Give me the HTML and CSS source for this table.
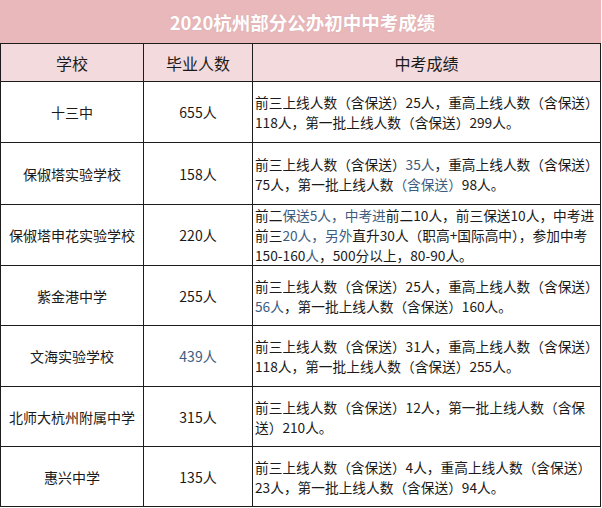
FILE: index.html
```html
<!DOCTYPE html>
<html lang="zh">
<head>
<meta charset="utf-8">
<title>2020杭州部分公办初中中考成绩</title>
<link rel="stylesheet" href="styles.css">
</head>
<body>
<div class="sheet">
  <div class="title">2020杭州部分公办初中中考成绩</div>
  <div class="grid">
    <div class="cell head">学校</div>
    <div class="cell head">毕业人数</div>
    <div class="cell head">中考成绩</div>

    <div class="cell c">十三中</div>
    <div class="cell c">655人</div>
    <div class="cell t"><p class="txt">前三上线人数（含保送）25人，重高上线人数（含保送）<br>118人，第一批上线人数（含保送）299人。</p></div>

    <div class="cell c">保俶塔实验学校</div>
    <div class="cell c">158人</div>
    <div class="cell t"><p class="txt">前三上线人数（含保送）<span class="hl">35人</span>，重高上线人数（含保送）<br>75人，第一批上线人数<span class="hl">（含保送）</span>98人。</p></div>

    <div class="cell c">保俶塔申花实验学校</div>
    <div class="cell c">220人</div>
    <div class="cell t"><p class="txt">前二<span class="hl">保送5人，中考进</span>前二10人，前三保送10人，中考进<br>前三<span class="hl">20人，另外</span>直升30人（职高+国际高中），参加中考<br>150-160<span class="hl">人</span>，500分以上，80-90人。</p></div>

    <div class="cell c">紫金港中学</div>
    <div class="cell c">255人</div>
    <div class="cell t"><p class="txt">前三上线人数（含保送）25人，重高上线人数（含保送）<br><span class="hl">56人</span>，第一批上线人数（含保送）160人。</p></div>

    <div class="cell c">文海实验学校</div>
    <div class="cell c"><span class="hl">439人</span></div>
    <div class="cell t"><p class="txt">前三上线人数（含保送）31人，重高上线人数（含保送）<br>118人，第一批上线人数（含保送）255人。</p></div>

    <div class="cell c">北师大杭州附属中学</div>
    <div class="cell c">315人</div>
    <div class="cell t"><p class="txt">前三上线人数（含保送）12人，第一批上线人数（含保<br>送）210人。</p></div>

    <div class="cell c">惠兴中学</div>
    <div class="cell c">135人</div>
    <div class="cell t"><p class="txt">前三上线人数（含保送）4人，重高上线人数（含保送）<br>23人，第一批上线人数（含保送）94人。</p></div>
  </div>
</div>
</body>
</html>
```

FILE: styles.css
```css
html, body {
  margin: 0;
  padding: 0;
  background: #ffffff;
}

body {
  font-family: "Noto Sans CJK SC", "Noto Sans", sans-serif;
  color: #1a1a1a;
}

.sheet {
  width: 601px;
}

.title {
  height: 43px;
  background: #e8b8bb;
  color: #ffffff;
  font-size: 18.5px;
  font-weight: 700;
  display: flex;
  align-items: center;
  justify-content: center;
  padding-left: 4px;
  box-sizing: border-box;
  text-shadow: 0 0 1px rgba(200, 140, 145, 0.6);
}

.grid {
  display: grid;
  grid-template-columns: 142px 108px 347px;
  grid-template-rows: 37px 60px 61px 60px 59px 60px 59px 59px;
  gap: 1px;
  padding: 1px;
  background: #1c1c1c;
}

.cell {
  background: #ffffff;
  display: flex;
  align-items: center;
  font-size: 14px;
}

.head {
  background: #f2dadd;
  justify-content: center;
  font-size: 16px;
}

.c {
  justify-content: center;
}

.t {
  padding-left: 2px;
}

.txt {
  margin: 0;
  font-size: 13.7px;
  line-height: 20px;
  white-space: nowrap;
}

.hl {
  color: #3d5d80;
}
```
